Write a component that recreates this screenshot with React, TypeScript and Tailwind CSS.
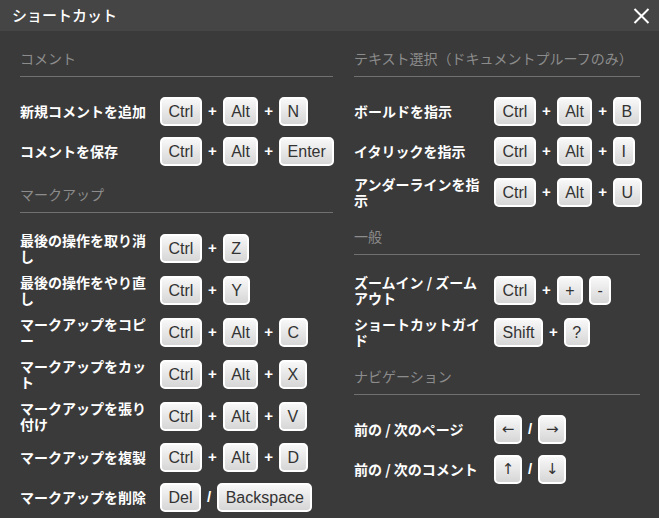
type Item = { k: string } | { s: string };

type Row = { label: string; items: Item[] };

type Section = { title: string; rows: Row[] };

const k = (v: string): Item => ({ k: v });
const s = (v: string): Item => ({ s: v });

const ctrlAlt = (x: string) => [k('Ctrl'), s('+'), k('Alt'), s('+'), k(x)];

const left: Section[] = [
  {
    title: 'コメント',
    rows: [
      { label: '新規コメントを追加', items: ctrlAlt('N') },
      { label: 'コメントを保存', items: ctrlAlt('Enter') },
    ],
  },
  {
    title: 'マークアップ',
    rows: [
      { label: '最後の操作を取り消し', items: [k('Ctrl'), s('+'), k('Z')] },
      { label: '最後の操作をやり直し', items: [k('Ctrl'), s('+'), k('Y')] },
      { label: 'マークアップをコピー', items: ctrlAlt('C') },
      { label: 'マークアップをカット', items: ctrlAlt('X') },
      { label: 'マークアップを張り付け', items: ctrlAlt('V') },
      { label: 'マークアップを複製', items: ctrlAlt('D') },
      { label: 'マークアップを削除', items: [k('Del'), s('/'), k('Backspace')] },
    ],
  },
];

const right: Section[] = [
  {
    title: 'テキスト選択（ドキュメントプルーフのみ）',
    rows: [
      { label: 'ボールドを指示', items: ctrlAlt('B') },
      { label: 'イタリックを指示', items: ctrlAlt('I') },
      { label: 'アンダーラインを指示', items: ctrlAlt('U') },
    ],
  },
  {
    title: '一般',
    rows: [
      { label: 'ズームイン / ズームアウト', items: [k('Ctrl'), s('+'), k('+'), s(''), k('-')] },
      { label: 'ショートカットガイド', items: [k('Shift'), s('+'), k('?')] },
    ],
  },
  {
    title: 'ナビゲーション',
    rows: [
      { label: '前の / 次のページ', items: [k('←'), s('/'), k('→')] },
      { label: '前の / 次のコメント', items: [k('↑'), s('/'), k('↓')] },
    ],
  },
];

const isArrow = (v: string) => ['←', '→', '↑', '↓'].includes(v);

function Key({ value }: { value: string }) {
  return (
    <kbd
      className={`inline-flex h-[29px] items-center justify-center rounded-[5px] border-2 border-white bg-linear-to-b from-[#f8f8f8] to-[#d6d6d6] text-[#333] ${
        isArrow(value)
          ? "w-[28px] font-['DejaVu_Sans',sans-serif] text-[15px]"
          : "px-[6.5px] font-['Liberation_Sans',sans-serif] text-[16px]"
      }`}
    >
      {value}
    </kbd>
  );
}

function ShortcutRow({ row }: { row: Row }) {
  return (
    <div className="flex items-center">
      <div className="w-[140px] shrink-0 pr-[6px] text-[14px] font-bold leading-[15.5px] text-white">
        {row.label}
      </div>
      <div className="flex items-center">
        {row.items.map((it, i) =>
          'k' in it ? (
            <Key key={i} value={it.k} />
          ) : it.s ? (
            <span
              key={i}
              className="mx-[6px] font-['Liberation_Sans',sans-serif] text-[15px] font-bold text-white"
            >
              {it.s}
            </span>
          ) : (
            <span key={i} className="w-[6px]" />
          )
        )}
      </div>
    </div>
  );
}

function Column({ sections }: { sections: Section[] }) {
  return (
    <div className="flex flex-col">
      {sections.map((sec, i) => (
        <div key={sec.title} className={i > 0 ? 'mt-[18px]' : ''}>
          <div className="h-[29px] border-b border-[#707070] text-[14px] leading-[20px] text-[#8c8c8c]">
            {sec.title}
          </div>
          <div className="mt-[20px] flex flex-col gap-[11px]">
            {sec.rows.map((r) => (
              <ShortcutRow key={r.label} row={r} />
            ))}
          </div>
        </div>
      ))}
    </div>
  );
}

export default function App() {
  return (
    <div className="min-h-screen w-full bg-[#3a3a3a] font-['Noto_Sans_CJK_JP',sans-serif]">
      <div className="flex h-[31px] items-center justify-between bg-[#454545] pl-[12px] pr-[7px]">
        <h1 className="text-[15px] font-medium text-white">ショートカット</h1>
        <button className="p-[2px]">
          <svg width="17" height="16" viewBox="0 0 17 16" fill="none">
            <path d="M1.5 1L15.5 15M15.5 1L1.5 15" stroke="white" strokeWidth="2" />
          </svg>
        </button>
      </div>
      <div className="grid grid-cols-[313px_286px] gap-x-[21px] px-[20px] pt-[17px]">
        <Column sections={left} />
        <Column sections={right} />
      </div>
    </div>
  );
}
